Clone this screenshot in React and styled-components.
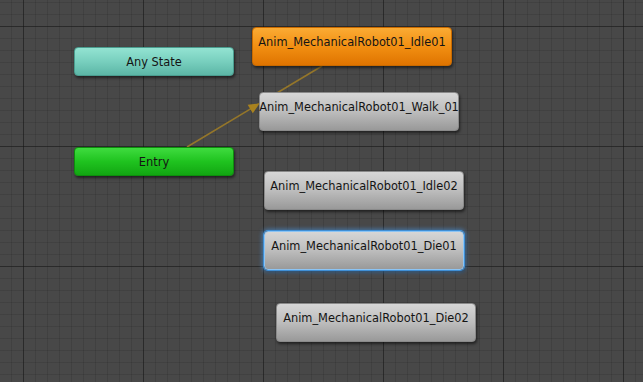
import React from 'react';
import styled, { createGlobalStyle, css } from 'styled-components';

const GlobalStyle = createGlobalStyle`
  html, body {
    margin: 0;
    padding: 0;
    background: #484848;
  }
  body {
    font-family: 'DejaVu Sans', Verdana, sans-serif;
  }
`;

const Canvas = styled.div`
  position: relative;
  width: 643px;
  height: 382px;
  overflow: hidden;
  background-color: #484848;
  background-image:
    linear-gradient(to right, rgba(20, 20, 20, 0.5) 1px, transparent 1px),
    linear-gradient(to bottom, rgba(20, 20, 20, 0.5) 1px, transparent 1px),
    linear-gradient(to right, rgba(30, 30, 30, 0.16) 1px, transparent 1px),
    linear-gradient(to bottom, rgba(30, 30, 30, 0.16) 1px, transparent 1px);
  background-size: 120px 120px, 120px 120px, 12px 12px, 12px 12px;
  background-position: 23px 26px, 23px 26px, 23px 26px, 23px 26px;
`;

const Wires = styled.svg`
  position: absolute;
  left: 0;
  top: 0;
  width: 643px;
  height: 382px;
  pointer-events: none;
`;

const skins = {
  state: css`
    background: linear-gradient(to bottom, #d6d6d6 0%, #bdbdbd 50%, #999 100%);
    border: 1px solid #8a8a8a;
  `,
  default: css`
    background: linear-gradient(to bottom, #fbab34 0%, #f28f12 50%, #df7400 100%);
    border: 1px solid #c86a00;
  `,
  entry: css`
    background: linear-gradient(to bottom, #3fdc3f 0%, #1fc31f 50%, #12a612 100%);
    border: 1px solid #0e8e0e;
  `,
  any: css`
    background: linear-gradient(to bottom, #93e3d2 0%, #78cfbe 50%, #5cb6a6 100%);
    border: 1px solid #4a9d8f;
  `,
};

const Node = styled.div`
  position: absolute;
  box-sizing: border-box;
  width: ${({ $small }) => ($small ? 160 : 200)}px;
  height: ${({ $small }) => ($small ? 29 : 39)}px;
  border-radius: 4px;
  display: flex;
  justify-content: center;
  align-items: ${({ $small }) => ($small ? 'center' : 'flex-start')};
  padding-top: ${({ $small }) => ($small ? 1 : 8)}px;
  font-size: 11.4px;
  line-height: 13px;
  color: #141414;
  white-space: nowrap;
  box-shadow: 1px 2px 3px rgba(0, 0, 0, 0.55);
  ${({ $kind }) => skins[$kind]}
  ${({ $selected }) =>
    $selected &&
    css`
      border: 1px solid #8cc4f4;
      box-shadow: 0 0 0 1px #3f8fd6, 0 0 4px 2px rgba(70, 150, 230, 0.6), 1px 2px 3px rgba(0, 0, 0, 0.5);
    `}
`;

const nodes = [
  { name: 'Any State', x: 74, y: 47, kind: 'any', small: true },
  { name: 'Entry', x: 74, y: 147, kind: 'entry', small: true },
  { name: 'Anim_MechanicalRobot01_Idle01', x: 252, y: 27, kind: 'default' },
  { name: 'Anim_MechanicalRobot01_Walk_01', x: 259, y: 92, kind: 'state' },
  { name: 'Anim_MechanicalRobot01_Idle02', x: 264, y: 171, kind: 'state' },
  { name: 'Anim_MechanicalRobot01_Die01', x: 264, y: 231, kind: 'state', selected: true },
  { name: 'Anim_MechanicalRobot01_Die02', x: 276, y: 303, kind: 'state' },
];

// default transition Entry -> Idle01, arrow head at the midpoint
const from = { x: 187, y: 147 };
const to = { x: 322, y: 66 };

function Arrow() {
  const mx = (from.x + to.x) / 2;
  const my = (from.y + to.y) / 2;
  const angle = (Math.atan2(to.y - from.y, to.x - from.x) * 180) / Math.PI;
  return (
    <Wires>
      <line x1={from.x} y1={from.y} x2={to.x} y2={to.y} stroke="#94762a" strokeWidth="1.6" />
      <polygon
        points="6,0 -5,-5 -5,5"
        fill="#a8821f"
        transform={`translate(${mx} ${my}) rotate(${angle})`}
      />
    </Wires>
  );
}

export default function App() {
  return (
    <>
      <GlobalStyle />
      <Canvas>
        <Arrow />
        {nodes.map((n) => (
          <Node
            key={n.name}
            $kind={n.kind}
            $small={n.small}
            $selected={n.selected}
            style={{ left: n.x, top: n.y }}
          >
            {n.name}
          </Node>
        ))}
      </Canvas>
    </>
  );
}
